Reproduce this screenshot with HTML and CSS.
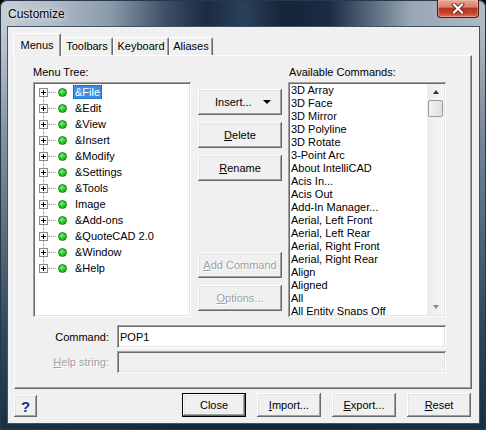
FILE: index.html
```html
<!DOCTYPE html>
<html>
<head>
<meta charset="utf-8">
<link rel="stylesheet" href="styles.css">
</head>
<body>
<div class="window">
  <div class="titlebar">
    <span class="title">Customize</span>
    <div class="close-btn">
      <svg width="14" height="11" viewBox="0 0 14 11">
        <path d="M3 1.5L11 9.5M11 1.5L3 9.5" stroke="#6a2418" stroke-width="4" stroke-linecap="square"/>
        <path d="M3 1.5L11 9.5M11 1.5L3 9.5" stroke="#fff" stroke-width="2.2" stroke-linecap="square"/>
      </svg>
    </div>
  </div>
  <div class="client">
    <div class="tabs">
      <div class="tab active w-menus">Menus</div>
      <div class="tab w-toolbars">Toolbars</div>
      <div class="tab w-keyboard">Keyboard</div>
      <div class="tab w-aliases">Aliases</div>
    </div>
    <div class="panel">
      <div class="top">
        <div class="col-tree">
          <div class="label">Menu Tree:</div>
          <div class="field tree">
            <div class="row"><svg class="exp" width="9" height="9"><rect x=".5" y=".5" width="8" height="8" fill="#fff" stroke="#8a8a8a"/><path d="M2 4.5h5M4.5 2v5" stroke="#000"/></svg><span class="conn"></span><span class="dot"></span><span class="name sel">&amp;File</span></div>
            <div class="row"><svg class="exp" width="9" height="9"><rect x=".5" y=".5" width="8" height="8" fill="#fff" stroke="#8a8a8a"/><path d="M2 4.5h5M4.5 2v5" stroke="#000"/></svg><span class="conn"></span><span class="dot"></span><span class="name">&amp;Edit</span></div>
            <div class="row"><svg class="exp" width="9" height="9"><rect x=".5" y=".5" width="8" height="8" fill="#fff" stroke="#8a8a8a"/><path d="M2 4.5h5M4.5 2v5" stroke="#000"/></svg><span class="conn"></span><span class="dot"></span><span class="name">&amp;View</span></div>
            <div class="row"><svg class="exp" width="9" height="9"><rect x=".5" y=".5" width="8" height="8" fill="#fff" stroke="#8a8a8a"/><path d="M2 4.5h5M4.5 2v5" stroke="#000"/></svg><span class="conn"></span><span class="dot"></span><span class="name">&amp;Insert</span></div>
            <div class="row"><svg class="exp" width="9" height="9"><rect x=".5" y=".5" width="8" height="8" fill="#fff" stroke="#8a8a8a"/><path d="M2 4.5h5M4.5 2v5" stroke="#000"/></svg><span class="conn"></span><span class="dot"></span><span class="name">&amp;Modify</span></div>
            <div class="row"><svg class="exp" width="9" height="9"><rect x=".5" y=".5" width="8" height="8" fill="#fff" stroke="#8a8a8a"/><path d="M2 4.5h5M4.5 2v5" stroke="#000"/></svg><span class="conn"></span><span class="dot"></span><span class="name">&amp;Settings</span></div>
            <div class="row"><svg class="exp" width="9" height="9"><rect x=".5" y=".5" width="8" height="8" fill="#fff" stroke="#8a8a8a"/><path d="M2 4.5h5M4.5 2v5" stroke="#000"/></svg><span class="conn"></span><span class="dot"></span><span class="name">&amp;Tools</span></div>
            <div class="row"><svg class="exp" width="9" height="9"><rect x=".5" y=".5" width="8" height="8" fill="#fff" stroke="#8a8a8a"/><path d="M2 4.5h5M4.5 2v5" stroke="#000"/></svg><span class="conn"></span><span class="dot"></span><span class="name">Image</span></div>
            <div class="row"><svg class="exp" width="9" height="9"><rect x=".5" y=".5" width="8" height="8" fill="#fff" stroke="#8a8a8a"/><path d="M2 4.5h5M4.5 2v5" stroke="#000"/></svg><span class="conn"></span><span class="dot"></span><span class="name">&amp;Add-ons</span></div>
            <div class="row"><svg class="exp" width="9" height="9"><rect x=".5" y=".5" width="8" height="8" fill="#fff" stroke="#8a8a8a"/><path d="M2 4.5h5M4.5 2v5" stroke="#000"/></svg><span class="conn"></span><span class="dot"></span><span class="name">&amp;QuoteCAD 2.0</span></div>
            <div class="row"><svg class="exp" width="9" height="9"><rect x=".5" y=".5" width="8" height="8" fill="#fff" stroke="#8a8a8a"/><path d="M2 4.5h5M4.5 2v5" stroke="#000"/></svg><span class="conn"></span><span class="dot"></span><span class="name">&amp;Window</span></div>
            <div class="row"><svg class="exp" width="9" height="9"><rect x=".5" y=".5" width="8" height="8" fill="#fff" stroke="#8a8a8a"/><path d="M2 4.5h5M4.5 2v5" stroke="#000"/></svg><span class="conn"></span><span class="dot"></span><span class="name">&amp;Help</span></div>
          </div>
        </div>
        <div class="col-btns">
          <div class="btn insert"><span>Insert...</span><span class="tri-down"></span></div>
          <div class="btn"><span><u>D</u>elete</span></div>
          <div class="btn"><span><u>R</u>ename</span></div>
          <div class="btn disabled add-cmd"><span><u>A</u>dd Command</span></div>
          <div class="btn disabled"><span><u>O</u>ptions...</span></div>
        </div>
        <div class="col-list">
          <div class="label list-label">Available Commands:</div>
          <div class="field list">
            <div class="items">
              <div class="item">3D Array</div>
              <div class="item">3D Face</div>
              <div class="item">3D Mirror</div>
              <div class="item">3D Polyline</div>
              <div class="item">3D Rotate</div>
              <div class="item">3-Point Arc</div>
              <div class="item">About IntelliCAD</div>
              <div class="item">Acis In...</div>
              <div class="item">Acis Out</div>
              <div class="item">Add-In Manager...</div>
              <div class="item">Aerial, Left Front</div>
              <div class="item">Aerial, Left Rear</div>
              <div class="item">Aerial, Right Front</div>
              <div class="item">Aerial, Right Rear</div>
              <div class="item">Align</div>
              <div class="item">Aligned</div>
              <div class="item">All</div>
              <div class="item">All Entity Snaps Off</div>
            </div>
            <div class="scrollbar">
              <div class="sb-arrow"><span class="tri-up"></span></div>
              <div class="sb-thumb"></div>
              <div class="sb-track"></div>
              <div class="sb-arrow"><span class="tri-dn"></span></div>
            </div>
          </div>
        </div>
      </div>
      <div class="form-row first">
        <div class="form-label">Command:</div>
        <div class="input h23">POP1</div>
      </div>
      <div class="form-row second">
        <div class="form-label disabled-text"><u>H</u>elp string:</div>
        <div class="input h22 input-disabled"></div>
      </div>
    </div>
    <div class="bottom">
      <div class="btn help-btn">?</div>
      <div class="btn-group">
        <div class="btn default"><span>Close</span></div>
        <div class="btn"><span><u>I</u>mport...</span></div>
        <div class="btn"><span><u>E</u>xport...</span></div>
        <div class="btn"><span><u>R</u>eset</span></div>
      </div>
    </div>
  </div>
</div>
</body>
</html>
```

FILE: styles.css
```css
html, body {
  margin: 0;
  padding: 0;
  background: #000;
}
body {
  font: 11px "Liberation Sans", Arial, sans-serif;
  color: #000;
}
.window {
  width: 486px;
  height: 430px;
  box-sizing: border-box;
  display: flex;
  flex-direction: column;
  border-radius: 7px 7px 0 0;
  overflow: hidden;
  background:
    linear-gradient(180deg, rgba(0,0,0,0) 26px, rgba(30,55,80,0.4) 140px, rgba(20,50,70,0.85) 330px, rgba(15,40,58,0.95) 430px),
    linear-gradient(90deg, #c5cdd5 0px, #b2bdc8 50px, #8a9aaa 110px, #3d5066 165px, #1a2b42 205px, #2a405a 245px, #142439 285px, #1a2d44 330px, #56697c 370px, #98a5b2 410px, #b0bbc5 486px);
  box-shadow: inset 0 0 0 1px #27384a;
}
.titlebar {
  height: 27px;
  flex-shrink: 0;
  display: flex;
  align-items: flex-start;
}
.title {
  font-size: 12px;
  line-height: 14px;
  margin: 7px 0 0 8px;
  color: #000;
  text-shadow: 0 0 6px rgba(255,255,255,0.9), 0 0 2px rgba(255,255,255,0.8);
}
.close-btn {
  margin-left: auto;
  margin-right: 7px;
  width: 42px;
  height: 18px;
  box-sizing: border-box;
  border: 1px solid #4a1c14;
  border-top: none;
  border-radius: 0 0 4px 4px;
  background: linear-gradient(180deg, #e8a595 0%, #d88470 40%, #b8341f 50%, #c9472d 80%, #e0775a 100%);
  box-shadow: inset 0 0 0 1px rgba(255,200,190,0.45);
  display: flex;
  align-items: center;
  justify-content: center;
}
.client {
  flex: 1;
  margin: 0 7px 7px 8px;
  background: #f0f0f0;
  box-shadow: 0 0 0 1px #415366;
  display: flex;
  flex-direction: column;
}
.tabs {
  height: 28px;
  flex-shrink: 0;
  display: flex;
  align-items: flex-end;
  padding-left: 5px;
  position: relative;
  z-index: 1;
}
.tab {
  box-sizing: border-box;
  height: 18px;
  padding-top: 1px;
  line-height: 14px;
  text-align: center;
  border: 1px solid #fff;
  border-right-color: #696969;
  border-bottom: none;
  border-radius: 2px 2px 0 0;
  box-shadow: inset -1px 0 #a0a0a0;
  background: #f0f0f0;
}
.tab.active {
  height: 23px;
  padding-top: 4px;
  margin-bottom: -1px;
}
.w-menus { width: 48px; }
.w-toolbars { width: 52px; }
.w-keyboard { width: 56px; }
.w-aliases { width: 44px; }

.panel {
  box-sizing: border-box;
  height: 334px;
  margin: 0 7px 0 6px;
  border: 1px solid #fff;
  border-right-color: #696969;
  border-bottom-color: #696969;
  box-shadow: inset -1px -1px #a0a0a0;
  padding: 9px 0 15px 18px;
}
.top {
  display: flex;
  height: 252px;
}
.label {
  height: 17px;
  line-height: 14px;
}
.list-label {
  padding-left: 1px;
}
.field {
  box-sizing: border-box;
  background: #fff;
  box-shadow: inset 1px 1px #a0a0a0, inset -1px -1px #fff, inset 2px 2px #696969, inset -2px -2px #e3e3e3;
  padding: 2px;
  overflow: hidden;
}
.col-tree {
  width: 158px;
}
.tree {
  height: 235px;
}
.row {
  position: relative;
  height: 16px;
  display: flex;
  align-items: center;
  padding-left: 4px;
}
.row::before {
  content: "";
  position: absolute;
  left: 8px;
  top: 0;
  bottom: 0;
  border-left: 1px dotted #a0a0a0;
}
.row:first-child::before { top: 8px; }
.row:last-child::before { bottom: 8px; }
.exp {
  position: relative;
  flex-shrink: 0;
}
.conn {
  width: 8px;
  height: 0;
  border-top: 1px dotted #a0a0a0;
  margin-right: 2px;
}
.dot {
  width: 9px;
  height: 9px;
  box-sizing: border-box;
  border-radius: 50%;
  border: 1px solid #127a12;
  background: radial-gradient(circle at 40% 35%, #7cf07c 0, #22cc22 55%, #0fa40f 100%);
  margin-right: 6px;
}
.name {
  height: 14px;
  line-height: 14px;
  padding: 0 2px;
  box-sizing: border-box;
  white-space: nowrap;
}
.name.sel {
  background: #3a8ee6;
  color: #fff;
  outline: 1px dotted #1c4f8c;
  outline-offset: -1px;
}

.col-btns {
  width: 84px;
  margin-left: 7px;
  padding-top: 24px;
  display: flex;
  flex-direction: column;
  gap: 7px;
}
.btn {
  box-sizing: border-box;
  height: 26px;
  background: #f0f0f0;
  box-shadow: inset -1px -1px #696969, inset 1px 1px #fff, inset -2px -2px #a0a0a0, inset 2px 2px #e3e3e3;
  display: flex;
  align-items: center;
  justify-content: center;
  white-space: nowrap;
}
.btn u {
  text-decoration: underline;
  text-underline-offset: 1px;
}
.btn.insert {
  justify-content: flex-start;
  padding-left: 17px;
}
.tri-down {
  margin-left: auto;
  margin-right: 11px;
  width: 0;
  height: 0;
  border-left: 4px solid transparent;
  border-right: 4px solid transparent;
  border-top: 4px solid #000;
}
.btn.disabled {
  color: #a0a0a0;
  text-shadow: 1px 1px #fff;
}
.btn.add-cmd {
  margin-top: 64px;
}

.col-list {
  width: 158px;
  margin-left: 6px;
}
.list {
  height: 235px;
  display: flex;
}
.items {
  flex: 1;
  padding-left: 1px;
  overflow: hidden;
}
.item {
  height: 13px;
  line-height: 13px;
  white-space: nowrap;
}
.scrollbar {
  width: 17px;
  flex-shrink: 0;
  display: flex;
  flex-direction: column;
  align-items: center;
  background: linear-gradient(90deg, #ebebeb, #f6f6f6);
}
.sb-arrow {
  height: 16px;
  width: 17px;
  flex-shrink: 0;
  display: flex;
  align-items: center;
  justify-content: center;
}
.tri-up {
  width: 0;
  height: 0;
  border-left: 3px solid transparent;
  border-right: 3px solid transparent;
  border-bottom: 4px solid #333;
}
.tri-dn {
  width: 0;
  height: 0;
  border-left: 3px solid transparent;
  border-right: 3px solid transparent;
  border-top: 4px solid #8a8a8a;
}
.sb-thumb {
  width: 15px;
  height: 17px;
  box-sizing: border-box;
  border: 1px solid #9a9a9a;
  border-radius: 2px;
  background: linear-gradient(90deg, #f4f4f4, #dedede);
  flex-shrink: 0;
}
.sb-track {
  flex: 1;
}

.form-row {
  display: flex;
  align-items: center;
}
.form-row.first {
  margin-top: 8px;
}
.form-row.second {
  margin-top: 3px;
}
.form-label {
  width: 76px;
  margin-right: 8px;
  text-align: right;
  white-space: nowrap;
}
.disabled-text {
  color: #a0a0a0;
  text-shadow: 1px 1px #fff;
}
.input {
  box-sizing: border-box;
  width: 329px;
  background: #fff;
  box-shadow: inset 1px 1px #a0a0a0, inset -1px -1px #fff, inset 2px 2px #696969, inset -2px -2px #e3e3e3;
  padding-left: 3px;
  display: flex;
  align-items: center;
}
.h23 { height: 23px; }
.h22 { height: 22px; }
.input-disabled {
  background: #f0f0f0;
}

.bottom {
  display: flex;
  align-items: flex-end;
  height: 24px;
  margin-top: 4px;
  padding: 0 8px 0 6px;
}
.help-btn {
  width: 23px;
  height: 22px;
  color: #1b2e8c;
  font-weight: bold;
  font-size: 15px;
}
.btn-group {
  margin-left: auto;
  display: flex;
  gap: 11px;
}
.btn-group .btn {
  width: 64px;
  height: 24px;
}
.btn.default {
  box-shadow: inset 0 0 0 1px #000, inset -2px -2px #696969, inset 2px 2px #fff, inset -3px -3px #a0a0a0, inset 3px 3px #e3e3e3;
}
```
